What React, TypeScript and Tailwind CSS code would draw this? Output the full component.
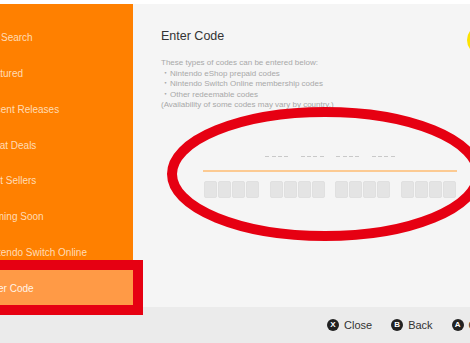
const MENU = [
  'Search',
  'Featured',
  'Recent Releases',
  'Great Deals',
  'Best Sellers',
  'Coming Soon',
  'Nintendo Switch Online',
  'Enter Code',
]

const CODE_TYPES = [
  'Nintendo eShop prepaid codes',
  'Nintendo Switch Online membership codes',
  'Other redeemable codes',
]

function ButtonHint({ letter, label }: { letter: string; label: string }) {
  return (
    <div className="flex items-center gap-[5px]">
      <span className="w-[12px] h-[12px] rounded-full bg-[#222] text-white text-[8px] font-bold leading-none flex items-center justify-center">
        {letter}
      </span>
      <span className="text-[11px] text-[#333]">{label}</span>
    </div>
  )
}

export default function App() {
  return (
    <div
      className="relative w-[470px] h-[343px] overflow-hidden bg-white flex flex-col pt-[4px]"
      style={{ fontFamily: '"Liberation Sans", "Noto Sans CJK JP", sans-serif' }}
    >
      <div className="flex h-[303px]">
        {/* Sidebar */}
        <nav className="w-[133px] shrink-0 bg-[#ff8000] pt-[16px] overflow-hidden">
          {MENU.map((item) => {
            const isActive = item === 'Enter Code'
            return (
              <div
                key={item}
                className={`h-[35.75px] flex items-center whitespace-nowrap text-[10px] ${
                  isActive ? 'bg-[#ff9a46] text-[#fff4e8]' : 'text-[#ffdcb6]'
                }`}
              >
                <span className={item === 'Search' ? 'ml-[1px]' : '-ml-[17px]'}>{item}</span>
              </div>
            )
          })}
        </nav>

        {/* Main panel */}
        <main className="relative flex-1 bg-[#f5f5f5] pt-[25px]">
          <div className="absolute top-[21px] left-[334px] w-[30px] h-[30px] rounded-full bg-[#fde300]" />

          <div className="pl-[28px]">
            <h1 className="text-[12.5px] leading-[15px] text-[#333]">Enter Code</h1>
            <div className="mt-[14px] text-[8px] leading-[10.5px] text-[#a8a8a8]">
              <p>These types of codes can be entered below:</p>
              {CODE_TYPES.map((t) => (
                <p key={t} className="flex">
                  <span className="w-[9px] text-center">・</span>
                  <span>{t}</span>
                </p>
              ))}
              <p>(Availability of some codes may vary by country.)</p>
            </div>
          </div>

          {/* Code entry */}
          <div className="ml-[70px] w-[254px] mt-[45px]">
            <div className="flex justify-center gap-[12.5px]">
              {[0, 1, 2, 3].map((g) => (
                <div key={g} className="flex gap-[2.3px]">
                  {[0, 1, 2, 3].map((d) => (
                    <span key={d} className="w-[4px] h-[1.5px] bg-[#c9c9c9]" />
                  ))}
                </div>
              ))}
            </div>
            <div className="mt-[13px] h-[2px] bg-[#fcca92]" />
            <div className="mt-[8.5px] pl-[1px] flex gap-[10.7px]">
              {[0, 1, 2, 3].map((g) => (
                <div key={g} className="flex gap-[1px]">
                  {[0, 1, 2, 3].map((b) => (
                    <span
                      key={b}
                      className="w-[13px] h-[17px] rounded-[2px] bg-[#e4e4e4] border border-[#e0e0e0]"
                    />
                  ))}
                </div>
              ))}
            </div>
          </div>
        </main>
      </div>

      {/* Bottom bar */}
      <footer className="h-[36px] bg-[#ebebeb] flex items-center gap-[19px] pl-[327px] whitespace-nowrap">
        <ButtonHint letter="X" label="Close" />
        <ButtonHint letter="B" label="Back" />
        <ButtonHint letter="A" label="OK" />
      </footer>

      {/* Annotation: highlight box */}
      <div className="absolute top-[260px] -left-[10px] w-[153px] h-[55px] border-[10px] border-[#e60012]" />

      {/* Annotation: ellipse */}
      <svg className="absolute inset-0 pointer-events-none" width="470" height="343">
        <ellipse cx="325" cy="174" rx="153" ry="62" fill="none" stroke="#e60012" strokeWidth="10" />
      </svg>
    </div>
  )
}
